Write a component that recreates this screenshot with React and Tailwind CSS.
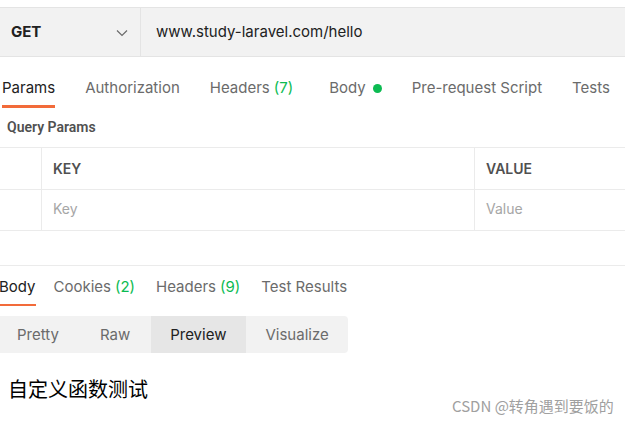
export default function App() {
  const reqTabs = [
    { label: "Params", active: true },
    { label: "Authorization" },
    { label: "Headers", count: "(7)" },
    { label: "Body", dot: true },
    { label: "Pre-request Script" },
    { label: "Tests" },
  ];
  const resTabs = [
    { label: "Body", active: true },
    { label: "Cookies", count: "(2)" },
    { label: "Headers", count: "(9)" },
    { label: "Test Results" },
  ];
  return (
    <div
      className="relative w-[625px] h-[423px] overflow-hidden bg-white text-[15px]"
      style={{ fontFamily: "Inter, 'Noto Sans', 'Noto Sans CJK SC', sans-serif" }}
    >
      {/* Request bar */}
      <div className="mt-[7px] flex h-[50px] border-y border-[#e4e4e4] bg-[#f2f2f2]">
        <div className="flex w-[141px] items-center justify-between border-r border-[#e4e4e4] pl-[11px] pr-[12px] pt-[1px]">
          <span className="font-bold text-[#212121]">GET</span>
          <svg width="12" height="8" viewBox="0 0 12 8" fill="none">
            <path d="M1 1.5L6 6.5L11 1.5" stroke="#6b6b6b" strokeWidth="1.2" />
          </svg>
        </div>
        <div className="flex items-center pl-[15px] pt-[1px] text-[#212121]">www.study-laravel.com/hello</div>
      </div>

      {/* Request tabs */}
      <div className="flex gap-[30px] pl-[2px]">
        {reqTabs.map((t, i) => (
          <div
            key={i}
            className={
              "flex items-center pt-[21px] pb-[7px] leading-[20px] border-b-[3px] " +
              (t.dot ? "ml-[6px] " : "") +
              (t.active ? "border-[#f26b3a] text-[#212121]" : "border-transparent text-[#6b6b6b]")
            }
          >
            <span>{t.label}</span>
            {t.count && <span className="ml-[4px] text-[#0cbb52]">{t.count}</span>}
            {t.dot && <span className="ml-[7px] h-[9px] w-[9px] rounded-full bg-[#0cbb52]" />}
          </div>
        ))}
      </div>

      {/* Query Params */}
      <div
        className="flex h-[39px] items-center pl-[7px] text-[14px] font-semibold text-[#505050]"
        style={{ fontFamily: "Roboto, 'Noto Sans', sans-serif" }}
      >
        Query Params
      </div>
      <div className="border-t border-[#ebebeb] text-[14px]">
        <div className="flex h-[42px] border-b border-[#ebebeb]">
          <div className="w-[42px] border-r border-[#ebebeb]" />
          <div className="flex w-[433px] items-center border-r border-[#ebebeb] pl-[11px] font-semibold text-[#505050]">KEY</div>
          <div className="flex items-center pl-[11px] font-semibold text-[#505050]">VALUE</div>
        </div>
        <div className="flex h-[41px] border-b border-[#ebebeb]">
          <div className="w-[42px] border-r border-[#ebebeb]" />
          <div className="flex w-[433px] items-center border-r border-[#ebebeb] pb-[3px] pl-[11px] text-[#a6a6a6]">Key</div>
          <div className="flex items-center pb-[3px] pl-[11px] text-[#a6a6a6]">Value</div>
        </div>
      </div>

      {/* Response tabs */}
      <div className="mt-[34px] border-t border-[#ebebeb]">
        <div className="flex gap-[21px] -ml-[1px]">
          {resTabs.map((t, i) => (
            <div
              key={i}
              className={
                "flex items-center pt-[11px] pb-[7px] leading-[20px] border-b-2 " +
                (t.active ? "-mr-[3px] border-[#f26b3a] text-[#212121]" : "border-transparent text-[#6b6b6b]")
              }
            >
              <span>{t.label}</span>
              {t.count && <span className="ml-[4px] text-[#0cbb52]">{t.count}</span>}
            </div>
          ))}
        </div>
      </div>

      {/* Segmented control */}
      <div className="mt-[10px] flex h-[37px] w-[351px] -ml-[3px] rounded-r-[4px] bg-[#f2f2f2] text-[#6b6b6b]">
        <div className="flex items-center px-[20px] pt-[2px]">Pretty</div>
        <div className="flex items-center px-[21px] pt-[2px]">Raw</div>
        <div className="flex items-center bg-[#e6e6e6] pl-[19px] pr-[20px] pt-[2px] text-[#212121]">Preview</div>
        <div className="flex items-center pl-[19px] pr-[20px] pt-[2px]">Visualize</div>
      </div>

      {/* Preview content */}
      <div
        className="mt-[22px] pl-[8px] text-[20px] leading-[28px] text-black"
        style={{ fontFamily: "'Noto Sans CJK SC', sans-serif" }}
      >
        自定义函数测试
      </div>

      {/* Watermark */}
      <div
        className="absolute left-[452px] top-[396px] text-[15px] leading-[20px] text-[#a0a0a0]"
        style={{ fontFamily: "'Noto Sans CJK SC', sans-serif" }}
      >
        CSDN @转角遇到要饭的
      </div>
    </div>
  );
}
